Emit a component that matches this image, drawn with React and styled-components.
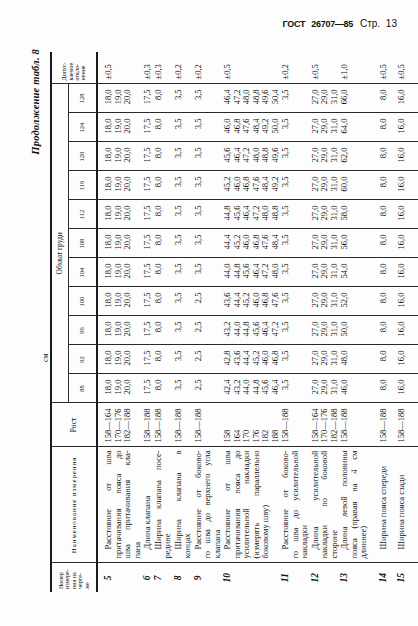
import React from "react";
import styled, { createGlobalStyle } from "styled-components";

const sizes = [88, 92, 96, 100, 104, 108, 112, 116, 120, 124, 128];
const fmt = (v) => v.toFixed(1).replace(".", ",");
const same = (lines) => sizes.map(() => lines);

const rows = [
	{
		n: "5",
		name: ["Расстояние от шва", "притачивания пояса до", "шва притачивания кла-", "пана"],
		growth: ["158—164", "170—176", "182—188"],
		values: same(["18,0", "19,0", "20,0"]),
		tol: "±0,5",
	},
	{ n: "6", name: ["Длина клапана"], growth: ["158—188"], values: same(["17,5"]), tol: "±0,3" },
	{
		n: "7",
		name: ["Ширина клапана посе-", "редине"],
		growth: ["158—188"],
		values: same(["8,0"]),
		tol: "±0,3",
	},
	{
		n: "8",
		name: ["Ширина клапана в", "концах"],
		growth: ["158—188"],
		values: same(["3,5"]),
		tol: "±0,2",
	},
	{
		n: "9",
		name: ["Расстояние от боково-", "го шва до верхнего угла", "клапана"],
		growth: ["158—188"],
		values: sizes.map((s, i) => [i < 4 ? "2,5" : "3,5"]),
		tol: "±0,2",
	},
	{
		n: "10",
		name: [
			"Расстояние от шва",
			"притачивания пояса до",
			"усилительной накладки",
			"(измерять параллельно",
			"боковому шву)",
		],
		growth: ["158", "164", "170", "176", "182", "188"],
		values: sizes.map((s, i) => [0, 1, 2, 3, 4, 5].map((k) => fmt(42.4 + 0.4 * i + 0.8 * k))),
		tol: "±0,5",
	},
	{
		n: "11",
		name: ["Расстояние от боково-", "го шва до усилительной", "накладки"],
		growth: ["158—188"],
		values: same(["3,5"]),
		tol: "±0,2",
	},
	{
		n: "12",
		name: ["Длина усилительной", "накладки по боковой", "стороне"],
		growth: ["158—164", "170—176", "182—188"],
		values: same(["27,0", "29,0", "31,0"]),
		tol: "±0,5",
	},
	{
		n: "13",
		name: ["Длина левой половины", "пояса (правая на 4 см", "длиннее)"],
		growth: ["158—188"],
		values: sizes.map((s, i) => [fmt(46 + 2 * i)]),
		tol: "±1,0",
	},
	{
		n: "14",
		name: ["Ширина пояса спереди"],
		growth: ["158—188"],
		values: same(["8,0"]),
		tol: "±0,5",
		gap: 9,
	},
	{
		n: "15",
		name: ["Ширина пояса сзади"],
		growth: ["158—188"],
		values: same(["16,0"]),
		tol: "±0,5",
		gap: 8,
	},
];

function App() {
	return (
		<>
			<GlobalStyle />
			<Page>
				<RunningHead>
					<Bold>ГОСТ 26707—85</Bold>
					<span>Стр. 13</span>
				</RunningHead>
				<Frame>
					<Turned>
						<Caption>Продолжение табл. 8</Caption>
						<Unit>см</Unit>
						<Table>
							<colgroup>
								<Col $w={29} />
								<Col $w={116} />
								<Col $w={44} />
								{sizes.map((s) => (
									<Col key={s} $w={29} />
								))}
								<Col $w={32} />
							</colgroup>
							<thead>
								<HeadRow $h={17}>
									<TinyHead rowSpan={2}>
										Номер
										<br />
										измере-
										<br />
										ния на
										<br />
										черте-
										<br />
										же
									</TinyHead>
									<HeadCell rowSpan={2}>
										<Spaced>Наименование измерения</Spaced>
									</HeadCell>
									<HeadCell rowSpan={2}>Рост</HeadCell>
									<GroupCell colSpan={sizes.length}>Обхват груди</GroupCell>
									<TinyHead rowSpan={2}>
										Допус-
										<br />
										каемое
										<br />
										откло-
										<br />
										нение
									</TinyHead>
								</HeadRow>
								<HeadRow $h={29}>
									{sizes.map((s) => (
										<SizeCell key={s}>{s}</SizeCell>
									))}
								</HeadRow>
							</thead>
							<tbody>
								{rows.map((r, i) => (
									<BodyRow
										key={r.n}
										$top={i === 0 ? 6 : 1 + (r.gap || 0)}
										$last={i === rows.length - 1}
									>
										<NumCell>{r.n}</NumCell>
										<NameCell>
											{r.name.map((line, k) => (
												<NameLine
													key={k}
													$first={k === 0}
													$last={k === r.name.length - 1}
												>
													{line}
												</NameLine>
											))}
										</NameCell>
										<GrowthCell>
											{r.growth.map((g) => (
												<div key={g}>{g}</div>
											))}
										</GrowthCell>
										{r.values.map((v, k) => (
											<ValueCell key={k}>
												{v.map((x, j) => (
													<div key={j}>{x}</div>
												))}
											</ValueCell>
										))}
										<TolCell>{r.tol}</TolCell>
									</BodyRow>
								))}
							</tbody>
						</Table>
					</Turned>
				</Frame>
			</Page>
		</>
	);
}

const GlobalStyle = createGlobalStyle`
	html, body {
		margin: 0;
		padding: 0;
		background: #fff;
		overflow: hidden;
	}
`;

const Page = styled.div`
	width: 418px;
	height: 626px;
	overflow: hidden;
	background: #fdfdfd;
	color: #111;
	padding-top: 17px;
	box-sizing: border-box;
`;

const RunningHead = styled.div`
	display: flex;
	justify-content: flex-end;
	align-items: baseline;
	gap: 7px;
	padding-right: 21px;
	height: 14px;
	font-family: "Liberation Sans", Arial, sans-serif;
	font-size: 10px;
	line-height: 14px;
	word-spacing: 3px;
`;

const Bold = styled.span`
	font-weight: 700;
	font-size: 9px;
	letter-spacing: -0.3px;
	word-spacing: 4px;
`;

const Frame = styled.div`
	width: 375px;
	height: 545px;
	margin: 16px 0 0 25px;
`;

/* the table is printed across the page: lay it out upright, then turn it */
const Turned = styled.div`
	width: 545px;
	height: 375px;
	transform-origin: 0 0;
	transform: translateY(545px) rotate(-90deg);
	font-family: "Liberation Serif", "Times New Roman", serif;
`;

const Caption = styled.div`
	text-align: right;
	padding: 4px 2px 0 0;
	height: 13px;
	font-size: 10.5px;
	line-height: 13px;
	font-style: italic;
	font-weight: 700;
	letter-spacing: 0.2px;
`;

const Unit = styled.div`
	padding-left: 230px;
	height: 8px;
	font-size: 8px;
	line-height: 8px;
`;

const Table = styled.table`
	width: 540px;
	table-layout: fixed;
	border-collapse: collapse;
	border-left: hidden;
	border-right: hidden;
	font-size: 8.5px;
	line-height: 9.5px;
	color: #0e0e0e;
`;

const Col = styled.col`
	width: ${(p) => p.$w}px;
`;

const HeadRow = styled.tr`
	height: ${(p) => p.$h}px;
`;

const HeadCell = styled.th`
	padding: 0;
	border: 1px solid #2a2a2a;
	border-top: 2px solid #1a1a1a;
	border-bottom: 2px solid #1a1a1a;
	font-weight: 400;
	font-size: 7.5px;
	line-height: 8px;
	text-align: center;
	vertical-align: middle;
`;

const TinyHead = styled(HeadCell)`
	font-size: 6px;
	line-height: 6.4px;
	text-align: left;
	padding-left: 3px;
`;

const Spaced = styled.span`
	letter-spacing: 0.9px;
	font-size: 7px;
`;

const GroupCell = styled(HeadCell)`
	border-bottom: 1px solid #2a2a2a;
	text-align: left;
	padding-left: 128px;
	font-size: 7.5px;
`;

const SizeCell = styled(HeadCell)`
	border-top: 1px solid #2a2a2a;
	font-size: 6.5px;
`;

const BodyRow = styled.tr`
	& > td {
		padding-top: ${(p) => p.$top}px;
		padding-bottom: ${(p) => (p.$last ? "12px" : "0")};
	}
`;

const BodyCell = styled.td`
	border-left: 1px solid #2a2a2a;
	border-right: 1px solid #2a2a2a;
	vertical-align: top;
	white-space: nowrap;
`;

const NumCell = styled(BodyCell)`
	text-align: center;
	font-style: italic;
	font-weight: 700;
	font-size: 9.5px;
`;

const NameCell = styled(BodyCell)`
	padding-left: 4px;
	padding-right: 3px;
`;

const NameLine = styled.div`
	text-align: justify;
	text-align-last: ${(p) => (p.$last ? "left" : "justify")};
	text-indent: ${(p) => (p.$first ? "9px" : "0")};
`;

const GrowthCell = styled(BodyCell)`
	padding-left: 4px;
`;

const ValueCell = styled(BodyCell)`
	text-align: right;
	padding-right: 5px;
`;

const TolCell = styled(BodyCell)`
	padding-left: 4px;
`;

export default App;
